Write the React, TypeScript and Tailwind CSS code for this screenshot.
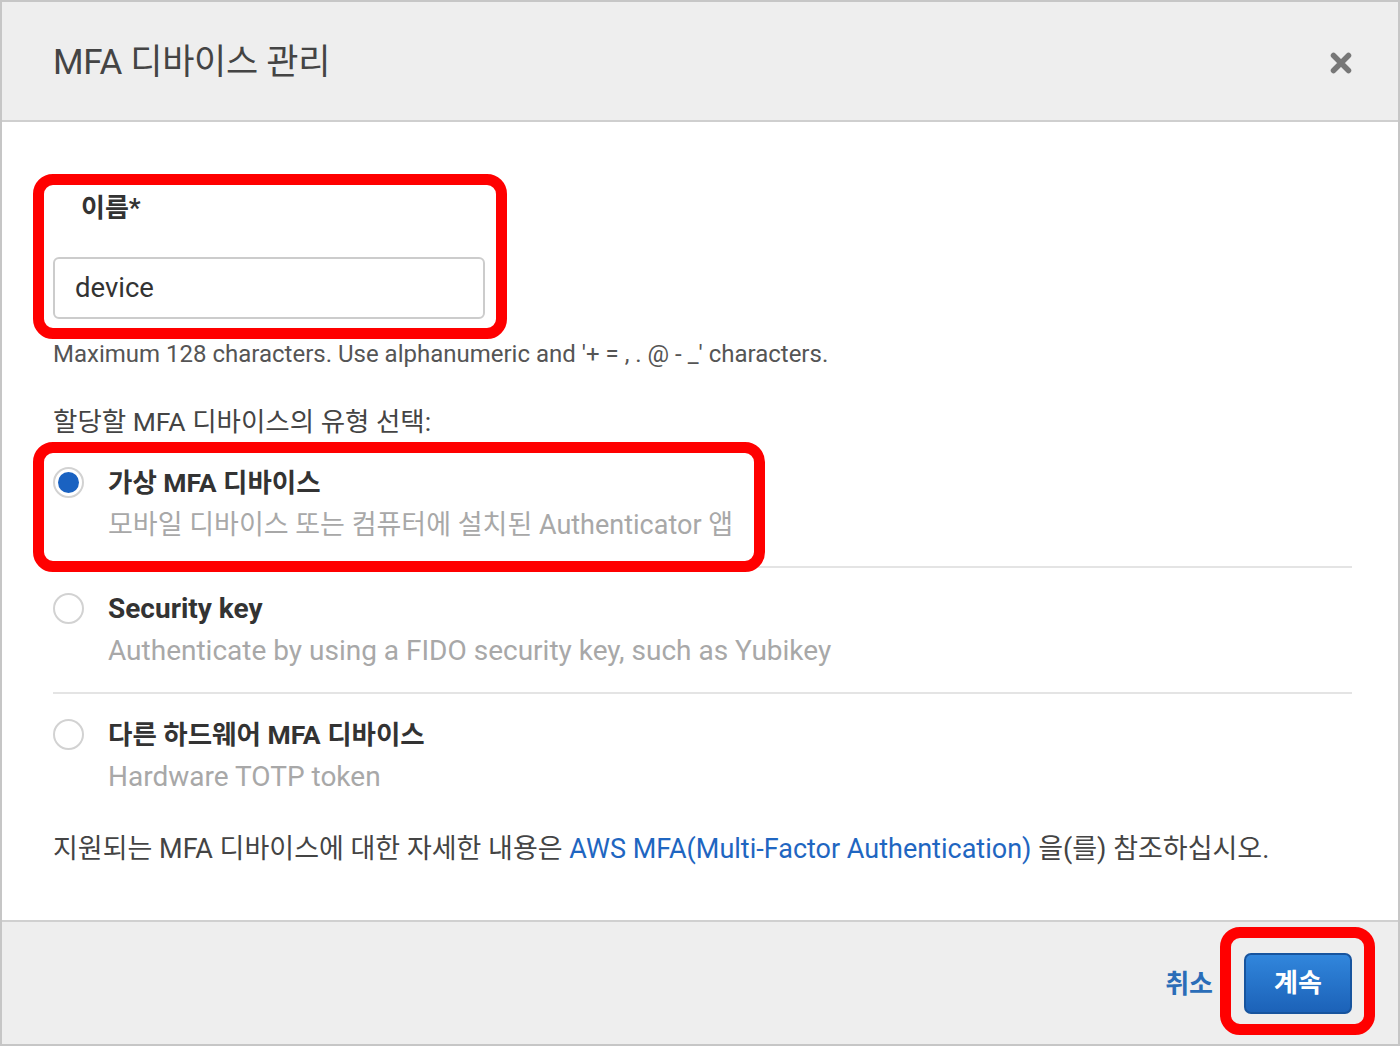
import React from 'react';

const FONT = "font-['Roboto','Noto_Sans_CJK_KR',sans-serif]";

interface OptionProps {
  title: string;
  desc: string;
  titleSize: string;
  descSize: string;
  checked?: boolean;
  last?: boolean;
}

function Option({ title, desc, titleSize, descSize, checked, last }: OptionProps) {
  return (
    <div className={`flex gap-[24px] ${last ? 'pt-[24px]' : 'pt-[24px] pb-[24px] border-b-2 border-[#e4e4e4]'} first:pt-0`}>
      <span className="mt-[1px] w-[31px] h-[31px] shrink-0 rounded-full border-2 border-[#d2d2d2] bg-white flex items-center justify-center">
        {checked && <span className="w-[21px] h-[21px] rounded-full bg-[#1a62c1]" />}
      </span>
      <div className="flex flex-col gap-[8px]">
        <div className={`${titleSize} leading-[34px] font-bold text-[#333]`}>{title}</div>
        <div className={`${descSize} leading-[34px] text-[#a8a8a8]`}>{desc}</div>
      </div>
    </div>
  );
}

export default function App() {
  return (
    <div className={`relative w-[1400px] h-[1046px] bg-white border-2 border-[#c6c6c6] flex flex-col ${FONT}`}>
      {/* Header */}
      <div className="h-[120px] shrink-0 bg-[#eeeeee] border-b-2 border-[#cfcfcf] flex items-center justify-between pl-[51px] pr-[46px]">
        <h1 className="text-[35px] text-[#444] tracking-[-0.3px] mt-[4px]">MFA 디바이스 관리</h1>
        <button className="text-[#777] mt-[4px]" aria-label="Close">
          <svg width="22" height="22" viewBox="0 0 22 22">
            <path d="M3.5 3.5 L18.5 18.5 M18.5 3.5 L3.5 18.5" stroke="#777" strokeWidth="5.5" strokeLinecap="round" />
          </svg>
        </button>
      </div>

      {/* Body */}
      <div className="flex-1 pl-[51px] pr-[46px] flex flex-col">
        <div className="mt-[70px] pl-[28px] text-[26px] leading-[32px] font-bold text-[#333]">이름*</div>
        <div className="mt-[33px] w-[432px] h-[62px] border-2 border-[#cccccc] rounded-[6px] flex items-center px-[20px] text-[27.5px] text-[#333]">
          device
        </div>
        <div className="mt-[20px] text-[24px] leading-[30px] text-[#555]">
          Maximum 128 characters. Use alphanumeric and '+ = , . @ - _' characters.
        </div>
        <div className="mt-[36px] text-[26.5px] leading-[34px] text-[#444]">할당할 MFA 디바이스의 유형 선택:</div>

        <div className="mt-[27px] flex flex-col">
          <Option
            title="가상 MFA 디바이스"
            desc="모바일 디바이스 또는 컴퓨터에 설치된 Authenticator 앱"
            titleSize="text-[26.5px]"
            descSize="text-[27px]"
            checked
          />
          <Option
            title="Security key"
            desc="Authenticate by using a FIDO security key, such as Yubikey"
            titleSize="text-[28px]"
            descSize="text-[28px]"
          />
          <Option
            title="다른 하드웨어 MFA 디바이스"
            desc="Hardware TOTP token"
            titleSize="text-[26.5px]"
            descSize="text-[28px]"
            last
          />
        </div>

        <div className="mt-[38px] text-[27px] leading-[34px] text-[#444]">
          지원되는 MFA 디바이스에 대한 자세한 내용은{' '}
          <a className="text-[#1f66c1]">AWS MFA(Multi-Factor Authentication)</a> 을(를) 참조하십시오.
        </div>
      </div>

      {/* Footer */}
      <div className="h-[124px] shrink-0 bg-[#eeeeee] border-t-2 border-[#d0d0d0] flex items-center justify-end gap-[31px] pr-[46px]">
        <a className="text-[26px] font-bold text-[#2a6db8] mt-[2px]">취소</a>
        <button className="w-[108px] h-[61px] rounded-[7px] border-2 border-[#17549e] bg-gradient-to-b from-[#3186dc] to-[#1c62b8] text-white text-[26px] font-bold">
          계속
        </button>
      </div>

      {/* Annotation boxes */}
      <div className="absolute left-[31px] top-[172px] w-[474px] h-[165px] border-[11px] border-[#ff0000] rounded-[20px] pointer-events-none" />
      <div className="absolute left-[31px] top-[440px] w-[732px] h-[130px] border-[11px] border-[#ff0000] rounded-[20px] pointer-events-none" />
      <div className="absolute left-[1218px] top-[925px] w-[155px] h-[108px] border-[11px] border-[#ff0000] rounded-[20px] pointer-events-none" />
    </div>
  );
}
